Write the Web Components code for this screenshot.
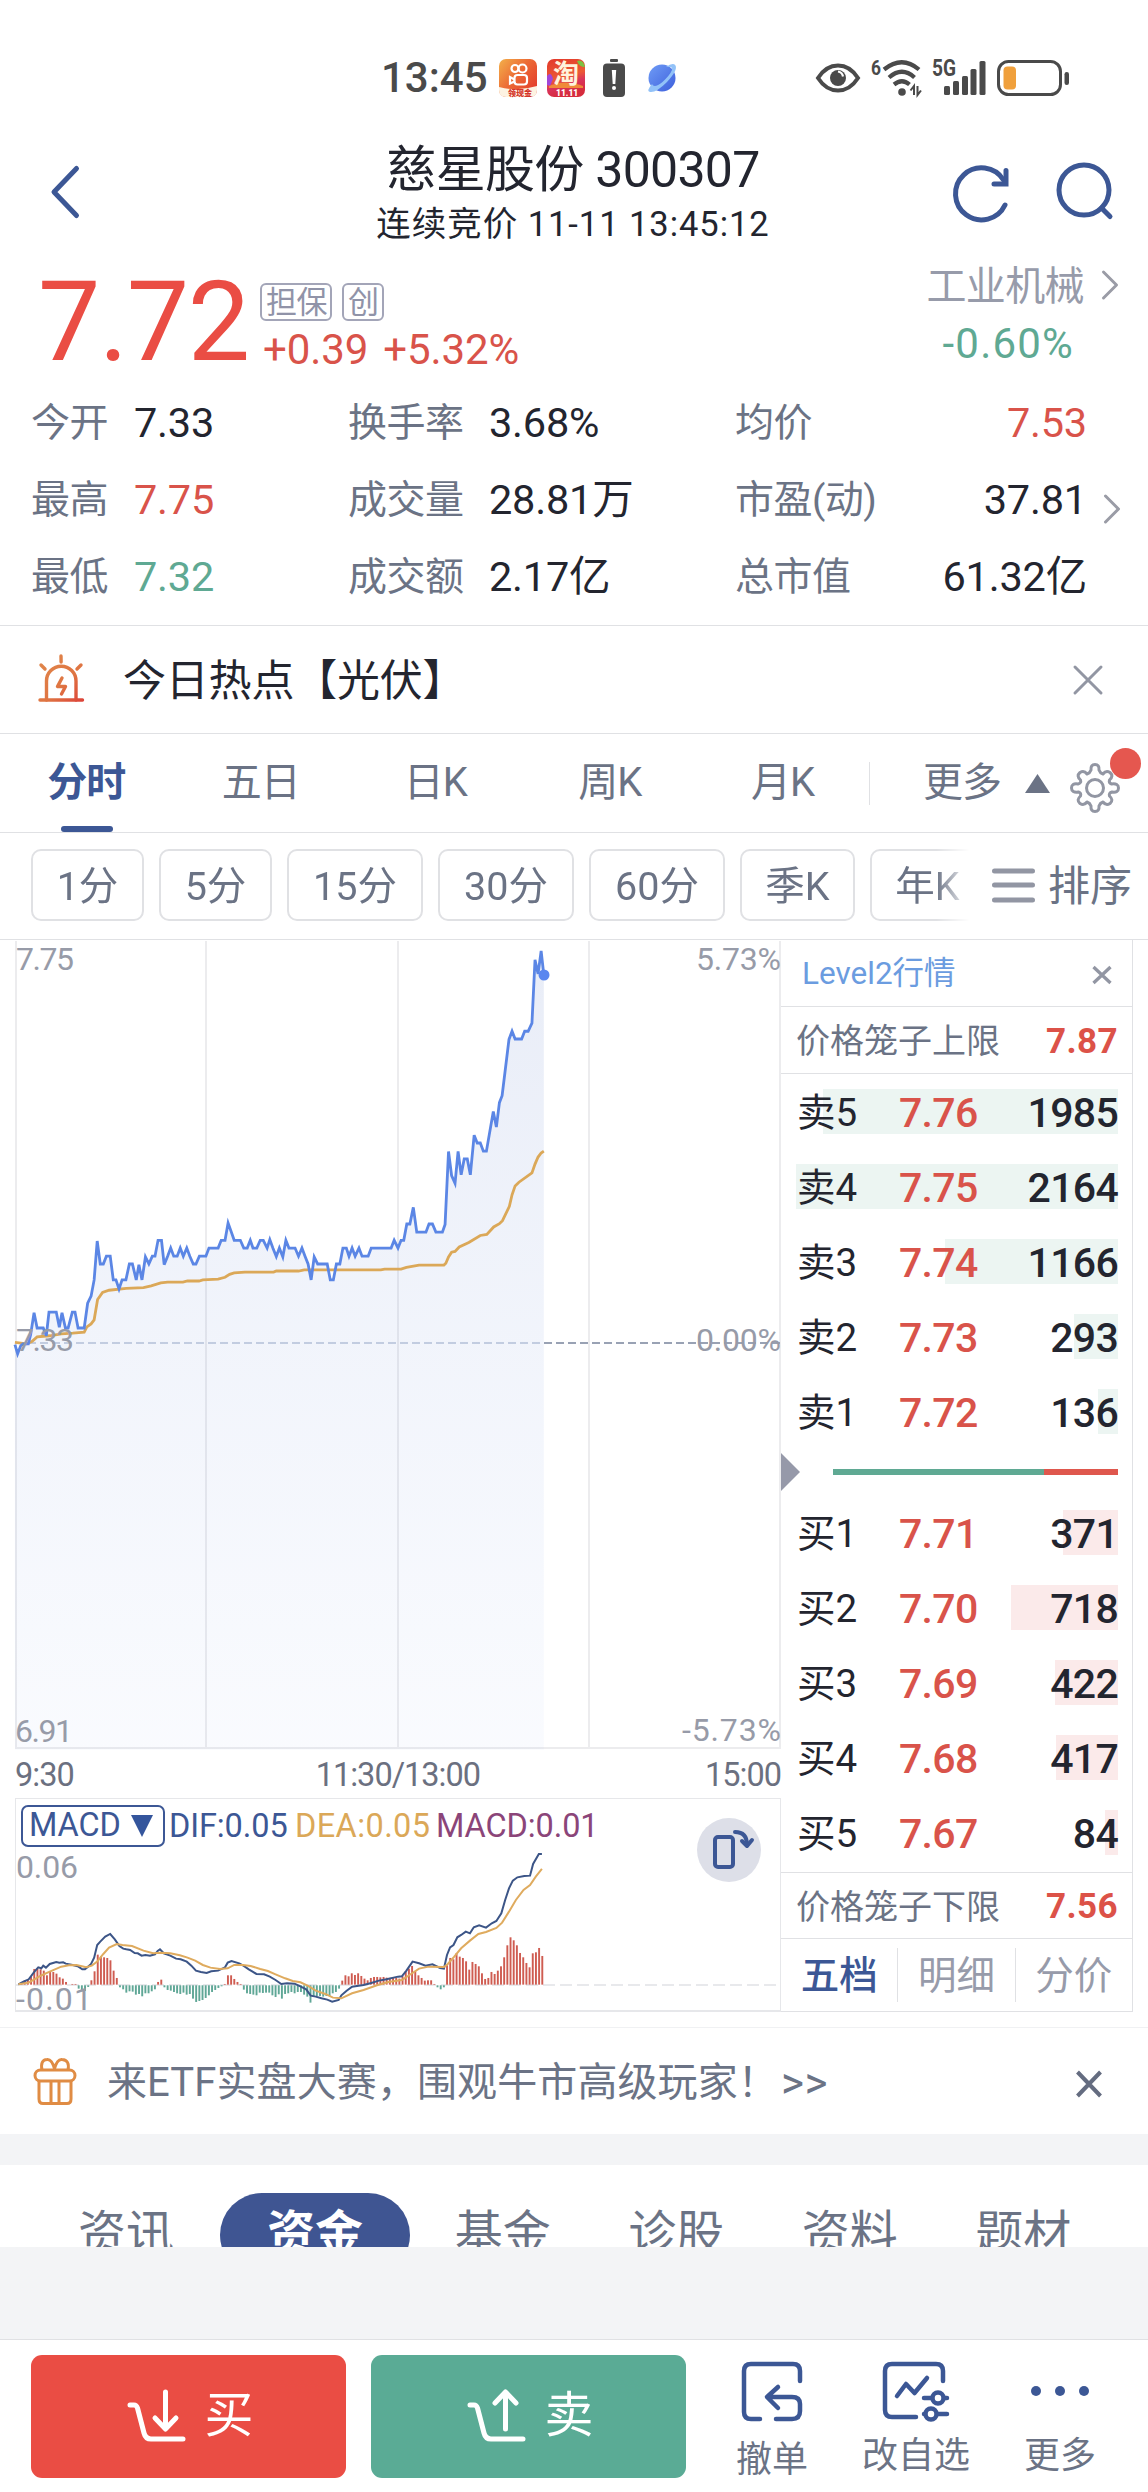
<!DOCTYPE html>
<html lang="zh-CN">
<head>
<meta charset="utf-8">
<title>慈星股份 300307</title>
<style>
  :root {
    --ink: #23252f;
    --label: #6b7385;
    --muted: #979baa;
    --blue: #3c5795;
    --red: #d9534a;
    --red-strong: #ea4d44;
    --green: #5fa993;
    --green-strong: #5aab95;
    --line: #e0e1e4;
    --page: #f3f4f6;
  }

  html, body {
    margin: 0;
    padding: 0;
  }

  body {
    width: 1148px;
    height: 2492px;
    overflow: hidden;
    display: flex;
    flex-direction: column;
    background: var(--page);
    color: var(--ink);
    font-family: Roboto, "Noto Sans CJK SC", sans-serif;
    line-height: 1;
  }
</style>
</head>
<body>

<status-bar></status-bar>

<quote-header>
  <span slot="name">慈星股份 300307</span>
  <span slot="time">连续竞价 11-11 13:45:12</span>
</quote-header>

<quote-summary></quote-summary>

<hot-banner>今日热点【光伏】</hot-banner>

<chart-tabs></chart-tabs>

<period-bar></period-bar>

<market-view>
  <time-chart slot="chart"></time-chart>
  <macd-chart slot="chart"></macd-chart>
  <order-book slot="book"></order-book>
</market-view>

<promo-banner>
  来ETF实盘大赛，围观牛市高级玩家！
  <span slot="more">&gt;&gt;</span>
</promo-banner>

<section-tabs></section-tabs>

<trade-bar></trade-bar>

<script>
// Base class: clones the static `html` of the subclass into an open shadow root
class ShadowElement extends HTMLElement {

  constructor() {
    super();
    this.attachShadow({ mode: 'open' });
    const template = document.createElement('template');
    template.innerHTML = this.constructor.html;
    this.shadowRoot.appendChild(template.content.cloneNode(true));
  }

}

/* ---------- icons ---------- */

const blue = '#3c5795';

const icons = {
  back: [28, 52, `<path d="M25.500 2.500 L3 26 L25.500 49.500" fill="none" stroke="${blue}" stroke-width="5" stroke-linecap="round" stroke-linejoin="round"/>`],
  refresh: [58, 58, `
    <g fill="none" stroke="${blue}" stroke-width="5" stroke-linecap="round">
      <path d="M53 41 A26 26 0 1 1 51.500 16"/>
      <path d="M54 6.500 V20 H42" stroke-linejoin="miter"/>
    </g>`],
  search: [58, 58, `
    <g fill="none" stroke="${blue}" stroke-width="5" stroke-linecap="round">
      <circle cx="28" cy="28" r="25"/>
      <path d="M45.500 46 L54 54.500"/>
    </g>`],
  chevron: [18, 30, `<path d="M2.500 2 L15.500 15 L2.500 28" fill="none" stroke="#9a9ca6" stroke-width="3" stroke-linecap="round" stroke-linejoin="round"/>`],
  close: [30, 30, `<path d="M2 2 L28 28 M28 2 L2 28" fill="none" stroke="#9296a3" stroke-width="3" stroke-linecap="round"/>`],
  'close-small': [20, 20, `<path d="M1.500 2 L18.500 18 M18.500 2 L1.500 18" fill="none" stroke="#9296a3" stroke-width="3.300"/>`],
  'close-dark': [26, 26, `<path d="M1.500 1 L24.500 25 M24.500 1 L1.500 25" fill="none" stroke="#646c80" stroke-width="4"/>`],
  kuaishou: [38, 38, `
    <defs><linearGradient id="g" x1="0" y1="0" x2="1" y2=".8"><stop offset="0" stop-color="#f3b04a"/><stop offset=".5" stop-color="#ec6a35"/><stop offset="1" stop-color="#e33b2c"/></linearGradient></defs>
    <rect width="38" height="38" rx="7" fill="url(#g)"/>
    <path d="M0 28 Q18 33 38 27 V31 Q38 38 31 38 H7 Q0 38 0 31 Z" fill="#fdf3e2"/>
    <g fill="none" stroke="#fff" stroke-width="2.200">
      <circle cx="16" cy="9.500" r="3.500"/><circle cx="23.500" cy="9.500" r="4"/>
      <rect x="15.500" y="16" width="12.500" height="9.500" rx="3"/>
      <path d="M15.500 20.500 L11 18 V24.500 L15.500 22.500"/>
    </g>
    <text x="9" y="36.500" font-size="8" font-weight="900" fill="#d4362b" font-family="'Noto Sans CJK SC', sans-serif">领现金</text>`],
  taobao: [38, 38, `
    <defs><linearGradient id="t" x1="0" y1="0" x2=".3" y2="1"><stop offset="0" stop-color="#e2382b"/><stop offset=".55" stop-color="#ec5a35"/><stop offset=".75" stop-color="#d9335b"/><stop offset="1" stop-color="#d62c3d"/></linearGradient></defs>
    <rect width="38" height="38" rx="7" fill="url(#t)"/>
    <path d="M0 17 Q4 12 6 20 L3 27 L0 26 Z" fill="#a046d8"/>
    <path d="M30 2 Q36 0 38 8 Q32 8 30 2 Z" fill="#7dc242"/>
    <path d="M2 27 Q18 20 36 27 L36 29 H2 Z" fill="#f08a3a"/>
    <text x="6" y="24" font-size="26" font-weight="700" fill="#fff3dc" font-family="'Noto Sans CJK SC', sans-serif">淘</text>
    <text x="9" y="36.500" font-size="8.500" font-weight="900" fill="#fff" font-family="Roboto, sans-serif">11.11</text>`],
  'battery-alert': [22, 38, `
    <rect x="7" y="0" width="8" height="3" rx="1" fill="#4a4a4a"/>
    <rect y="4.500" width="22" height="33.500" rx="4" fill="#4a4a4a"/>
    <path d="M8.800 11 H13.200 L12.300 25 H9.700 Z" fill="#fff"/><circle cx="11" cy="29" r="2" fill="#fff"/>`],
  planet: [30, 30, `
    <defs><linearGradient id="p" x1="0" y1="0" x2="1" y2="1"><stop offset="0" stop-color="#6f9cf6"/><stop offset="1" stop-color="#3d5fdc"/></linearGradient></defs>
    <circle cx="15" cy="15" r="13.500" fill="url(#p)"/>
    <path d="M5 21 Q-1 28 3 29 Q9 30 20 19 Q31 7 28.500 2.500 Q26 -1 19 4 Q26 3 25 7 Q23 12 15.500 19 Q7 26 5 21 Z" fill="#92c2f8"/>`],
  eye: [44, 30, `
    <path d="M2 15 Q10 2.500 22 2.500 Q34 2.500 42 15 Q34 27.500 22 27.500 Q10 27.500 2 15 Z" fill="none" stroke="#4a4a4a" stroke-width="4"/>
    <circle cx="22" cy="15" r="8" fill="#4a4a4a"/><path d="M22 8.500 A6 6 0 0 1 27 13.500" fill="none" stroke="#fff" stroke-width="2.200"/>`],
  wifi: [50, 38, `
    <text x="0" y="16" font-size="21" font-weight="700" fill="#4a4a4a" textLength="10" lengthAdjust="spacingAndGlyphs">6</text>
    <g fill="none" stroke="#4a4a4a" stroke-width="4.200">
      <path d="M13 10.500 Q31 -4 48 10.500"/><path d="M18 18.500 Q31 7 43.500 18.500"/><path d="M23 25.500 Q31 19 38.500 25.500"/>
    </g>
    <circle cx="31" cy="33" r="3.800" fill="#4a4a4a"/>
    <path d="M43 36 V27 L39.500 31.500 M46.500 27 V36 L50 31.500" fill="none" stroke="#4a4a4a" stroke-width="2"/>`],
  signal: [54, 38, `
    <text x="0" y="17" font-size="23" font-weight="700" fill="#4a4a4a" textLength="24" lengthAdjust="spacingAndGlyphs">5G</text>
    <g fill="#4a4a4a">
      <rect x="12" y="27" width="6" height="9" rx="1.500"/><rect x="21" y="22" width="6" height="14" rx="1.500"/>
      <rect x="30" y="17" width="6" height="19" rx="1.500"/><rect x="38.500" y="10" width="6" height="26" rx="1.500"/>
      <rect x="47.500" y="2" width="6" height="34" rx="1.500"/>
    </g>`],
  battery: [73, 36, `
    <rect x="1.500" y="1.500" width="62" height="33" rx="10" fill="none" stroke="#4a4a4a" stroke-width="3"/>
    <rect x="6.500" y="6.500" width="12.500" height="23" rx="4" fill="#f0a03c"/>
    <rect x="67.500" y="12" width="4.500" height="13" rx="2.200" fill="#4a4a4a"/>`],
  siren: [46, 48, `
    <defs><linearGradient id="s" x1="0" y1="0" x2="46" y2="48" gradientUnits="userSpaceOnUse"><stop offset="0" stop-color="#e08a4c"/><stop offset=".6" stop-color="#df7442"/><stop offset="1" stop-color="#dc4038"/></linearGradient></defs>
    <g fill="none" stroke="url(#s)" stroke-width="3.400" stroke-linecap="round" stroke-linejoin="round">
      <path d="M2 46 H44.500 L44.500 46.100"/><path d="M8.500 46 V27 A14.500 14.500 0 0 1 38 27 V46"/>
      <path d="M23 2 L23.100 8 M3 11 L7 15 M43 11 L39 15"/>
      <path d="M24 24 L19.500 32.500 H27.500 L23.500 40"/>
    </g>`],
  gear: [52, 52, `
    <g fill="none" stroke="#9296a3" stroke-width="3" stroke-linejoin="round">
      <circle cx="26" cy="26" r="8.500"/>
      <path d="M22 8 Q21.500 2.500 26 2.500 Q30.500 2.500 30 8 Q31 11 34 12 Q37 8 41 10.500 Q45 14 40.500 18 Q39.500 21 42.500 22 Q49.500 21 49.500 26 Q49.500 31 43 30 Q39.500 31 40.500 34 Q45 38 41 41.500 Q37 44 34 40 Q31 41 30 44 Q30.500 49.500 26 49.500 Q21.500 49.500 22 44 Q21 41 18 40 Q15 44 11 41.500 Q7 38 11.500 34 Q12.500 31 9.500 30 Q2.500 31 2.500 26 Q2.500 21 9 22 Q12.500 21 11.500 18 Q7 14 11 10.500 Q15 8 18 12 Q21 11 22 8 Z"/>
    </g>`],
  sort: [43, 36, `<path d="M2.500 4 H40.500 M2.500 18 H40.500 M2.500 33 H40.500" fill="none" stroke="#9296a3" stroke-width="5" stroke-linecap="round"/>`],
  'arrow-up': [25, 19, `<path d="M12.500 0 L25 19 H0 Z" fill="#6b7385"/>`],
  rotate: [64, 64, `
    <circle cx="32" cy="32" r="32" fill="#dddfe8"/>
    <g fill="none" stroke="${blue}" stroke-width="4" stroke-linecap="round" stroke-linejoin="round">
      <rect x="18" y="19" width="18" height="30" rx="3"/>
      <path d="M38 14 Q50 14 50 27"/><path d="M45 23 L50 28 L55 22"/>
    </g>`],
  gift: [44, 48, `
    <g fill="none" stroke="#e08c44" stroke-width="3" stroke-linejoin="round">
      <rect x="2" y="13" width="40" height="11" rx="5.500"/>
      <path d="M6 24 V42 Q6 46.500 10 46.500 H34 Q38 46.500 38 42 V24 M18 24 V46.500 M26 24 V46.500"/>
      <path d="M9 13 Q7 3 14 2.500 Q19 2 21.500 12 Q24 2 29 2.500 Q37 3 35 13"/>
    </g>`],
  buy: [60, 54, `
    <g fill="none" stroke="#fff" stroke-width="5" stroke-linecap="round" stroke-linejoin="round">
      <path d="M3 16 H7 Q9.500 16 10.500 19 L17 44 Q18.500 50 24 50 H56"/>
      <path d="M38.500 3 V38 M28 29 L38.500 40 L49 29"/>
    </g>`],
  sell: [60, 54, `
    <g fill="none" stroke="#fff" stroke-width="5" stroke-linecap="round" stroke-linejoin="round">
      <path d="M3 16 H7 Q9.500 16 10.500 19 L17 44 Q18.500 50 24 50 H56"/>
      <path d="M38.500 40 V4 M28 14 L38.500 3 L49 14"/>
    </g>`],
  cancel: [62, 62, `
    <g fill="none" stroke="${blue}" stroke-width="4.500" stroke-linecap="round" stroke-linejoin="round">
      <path d="M59 20 V10 Q59 3 52 3 H10 Q3 3 3 10 V51 Q3 58 10 58 H19"/>
      <path d="M37 26 L26 36 L37 47 M27 36 H51 Q59 36 59 43 V50 Q59 58 51 58 H35"/>
    </g>`],
  watch: [68, 62, `
    <g fill="none" stroke="${blue}" stroke-width="4.500" stroke-linecap="round" stroke-linejoin="round">
      <path d="M61 20 V10 Q61 3 54 3 H10 Q3 3 3 10 V49 Q3 56 10 56 H34"/>
      <path d="M15 35 L24 23 L32.500 32 L45 17"/>
      <path d="M42 37 H49 M63 37 H65 M42 53 H43 M56 53 H65"/>
      <circle cx="56" cy="37" r="5.500"/><circle cx="49" cy="53" r="5.500"/>
    </g>`],
  dots: [60, 62, `<g fill="${blue}"><circle cx="6" cy="30" r="5"/><circle cx="30" cy="30" r="5"/><circle cx="54" cy="30" r="5"/></g>`]
};

class UiIcon extends HTMLElement {

  connectedCallback() {
    if (this.shadowRoot) return;
    const [w, h, body] = icons[this.getAttribute('name')];
    this.attachShadow({ mode: 'open' }).innerHTML = `
      <style>
        :host { display: block; flex: none; width: ${w}px; height: ${h}px; }
        svg { display: block; overflow: visible; }
      </style>
      <svg width="${w}" height="${h}" viewBox="0 0 ${w} ${h}">${body}</svg>`;
  }

}

/* ---------- top of the page ---------- */

class StatusBar extends ShadowElement {

  static html = /*html*/`
    <style>
      :host { display: flex; align-items: center; flex: none; height: 120px; padding: 36px 78px 0 381px; box-sizing: border-box; background: #fff; color: #4a4a4a; }
      .time { font-size: 42px; font-weight: 500; width: 118px; }
      .apps { display: flex; align-items: center; gap: 10px; flex: 1; }
      .apps ui-icon:nth-child(3) { margin-left: 8px; }
      .apps ui-icon:nth-child(4) { margin-left: 12px; }
      .system { display: flex; align-items: center; gap: 11px; }
    </style>
    <div class="time">13:45</div>
    <div class="apps">
      <ui-icon name="kuaishou"></ui-icon>
      <ui-icon name="taobao"></ui-icon>
      <ui-icon name="battery-alert"></ui-icon>
      <ui-icon name="planet"></ui-icon>
    </div>
    <div class="system">
      <ui-icon name="eye"></ui-icon>
      <ui-icon name="wifi"></ui-icon>
      <ui-icon name="signal"></ui-icon>
      <ui-icon name="battery"></ui-icon>
    </div>
  `;

}

class QuoteHeader extends ShadowElement {

  static html = /*html*/`
    <style>
      :host { display: grid; grid-template-columns: 1fr auto 1fr; flex: none; height: 130px; padding: 0 34px 0 51px; box-sizing: border-box; background: #fff; }
      .back { padding-top: 46px; }
      .title { display: flex; flex-direction: column; align-items: center; padding: 24px 0 0; margin-right: 19px; }
      .name { font-size: 50px; letter-spacing: -0.7px; line-height: 52px; white-space: nowrap; }
      .time { font-size: 34.500px; line-height: 36px; margin-top: 10px; letter-spacing: .95px; white-space: nowrap; }
      .actions { display: flex; justify-content: flex-end; gap: 46px; padding-top: 42px; }
      .actions ui-icon:first-child { margin-top: 2px; }
    </style>
    <div class="back"><ui-icon name="back"></ui-icon></div>
    <div class="title">
      <div class="name"><slot name="name"></slot></div>
      <div class="time"><slot name="time"></slot></div>
    </div>
    <div class="actions">
      <ui-icon name="refresh"></ui-icon>
      <ui-icon name="search"></ui-icon>
    </div>
  `;

}

class StatItem extends HTMLElement {

  connectedCallback() {
    if (this.shadowRoot) return;
    this.attachShadow({ mode: 'open' }).innerHTML = /*html*/`
      <style>
        :host { display: flex; align-items: center; height: 77px; padding-top: 3px; box-sizing: border-box; white-space: nowrap; }
        .label { flex: none; width: var(--label-width); font-size: 39px; color: var(--label); letter-spacing: -0.5px; }
        .value { flex: 1; font-size: 41.500px; text-align: var(--value-align, left); letter-spacing: -0.2px; }
        :host([up]) .value { color: var(--red); }
        :host([down]) .value { color: var(--green); }
      </style>
      <div class="label">${this.getAttribute('label')}</div>
      <div class="value"><slot></slot></div>`;
  }

}

class QuoteSummary extends ShadowElement {

  static html = /*html*/`
    <style>
      :host { display: block; flex: none; height: 375px; padding: 0 29px 0 31px; box-sizing: border-box; background: #fff; }
      .top { display: flex; height: 133px; }
      .price { width: 229px; padding-top: 17px; margin-left: 7px; font-size: 111px; line-height: 111px; letter-spacing: -1.400px; color: var(--red-strong); }
      .detail { flex: 1; padding: 33px 0 0 0; margin-left: -7px; }
      .tags { display: flex; gap: 10px; }
      .tag { height: 38px; line-height: 35px; box-sizing: border-box; border: 2px solid #a3a5b8; border-radius: 6px; padding: 0 3px 0 4px; font-size: 31px; letter-spacing: -.5px; color: #9093a8; }
      .change { display: flex; gap: 15px; margin-top: 8px; padding-left: 3px; font-size: 42px; letter-spacing: -.1px; color: var(--red); }
      .sector { display: grid; grid-template-columns: auto 18px; column-gap: 17px; align-content: start; justify-items: end; padding-top: 17px; }
      .sector .name { font-size: 40px; line-height: 40px; color: var(--muted); letter-spacing: -.6px; }
      .sector ui-icon { margin-top: 3px; }
      .sector .rate { margin: 16px 10px 0 0; font-size: 42px; letter-spacing: 1.200px; color: var(--green); }
      .stats { display: flex; }
      .grid { display: grid; grid-template-columns: 317px 387px 352px; }
      .a { --label-width: 103px; }
      .b { --label-width: 141px; }
      .c { --label-width: 150px; --value-align: right; }
      .stats ui-icon { margin: 111px 0 0 16px; }
    </style>
    <div class="top">
      <div class="price">7.72</div>
      <div class="detail">
        <div class="tags"><div class="tag">担保</div><div class="tag">创</div></div>
        <div class="change"><span>+0.39</span><span>+5.32%</span></div>
      </div>
      <div class="sector">
        <div class="name">工业机械</div><ui-icon name="chevron"></ui-icon>
        <div class="rate">-0.60%</div>
      </div>
    </div>
    <div class="stats">
      <div class="grid">
        <stat-item class="a" label="今开">7.33</stat-item>
        <stat-item class="b" label="换手率">3.68%</stat-item>
        <stat-item class="c" label="均价" up>7.53</stat-item>
        <stat-item class="a" label="最高" up>7.75</stat-item>
        <stat-item class="b" label="成交量">28.81万</stat-item>
        <stat-item class="c" label="市盈(动)">37.81</stat-item>
        <stat-item class="a" label="最低" down>7.32</stat-item>
        <stat-item class="b" label="成交额">2.17亿</stat-item>
        <stat-item class="c" label="总市值">61.32亿</stat-item>
      </div>
      <ui-icon name="chevron"></ui-icon>
    </div>
  `;

}

class HotBanner extends ShadowElement {

  static html = /*html*/`
    <style>
      :host { display: flex; align-items: center; flex: none; height: 108px; padding: 0 45px 0 38px; box-sizing: border-box; background: #fff; border-top: 1px solid var(--line); }
      .text { flex: 1; padding: 3px 0 0 39px; font-size: 43px; letter-spacing: -.2px; }
      ui-icon[name="siren"] { margin-bottom: 3px; }
    </style>
    <ui-icon name="siren"></ui-icon>
    <div class="text"><slot></slot></div>
    <ui-icon name="close"></ui-icon>
  `;

}

class ChartTabs extends ShadowElement {

  static html = /*html*/`
    <style>
      :host { display: flex; flex: none; height: 99px; box-sizing: border-box; background: #fff; border-top: 1px solid var(--line); font-size: 40px; color: var(--label); letter-spacing: -1px; }
      .tab { display: flex; flex-direction: column; align-items: center; width: 174.500px; padding-top: 29px; box-sizing: border-box; }
      .tab span { margin-left: -2px; }
      .tab.active { color: var(--blue); font-weight: 700; }
      .tab.active::after { content: ""; width: 52px; height: 6px; margin-top: 23px; border-radius: 3px; background: var(--blue); }
      .tab.last { width: 171px; }
      .more { display: flex; align-items: flex-start; height: 43px; margin-top: 28px; border-left: 1px solid var(--line); padding-left: 53px; }
      .more span { margin-top: 1px; }
      .more ui-icon { margin: 12px 19px 0 24px; }
      .settings { position: relative; margin-top: 28px; }
      .badge { position: absolute; left: 41px; top: -14px; width: 31px; height: 31px; border-radius: 50%; background: #e5574f; }
    </style>
    <div class="tab active"><span>分时</span></div>
    <div class="tab"><span>五日</span></div>
    <div class="tab"><span>日K</span></div>
    <div class="tab"><span>周K</span></div>
    <div class="tab last"><span>月K</span></div>
    <div class="more"><span>更多</span><ui-icon name="arrow-up"></ui-icon></div>
    <div class="settings"><ui-icon name="gear"></ui-icon><div class="badge"></div></div>
  `;

}

class PeriodBar extends ShadowElement {

  static html = /*html*/`
    <style>
      :host { display: flex; align-items: center; flex: none; height: 107px; padding: 0 16px 2px 31px; box-sizing: border-box; background: #fff; border-top: 1px solid var(--line); color: var(--label); }
      .chips { display: flex; gap: 15px; width: 939px; overflow: hidden; -webkit-mask-image: linear-gradient(90deg, #000 905px, transparent 939px); mask-image: linear-gradient(90deg, #000 905px, transparent 939px); }
      .chip { flex: none; width: 113px; height: 72px; line-height: 71px; box-sizing: border-box; border: 2px solid var(--line); border-radius: 10px; text-align: center; font-size: 39.500px; }
      .chip.wide { width: 136px; }
      .chip.k { width: 115px; }
      ui-icon { margin-left: 22px; }
      .sort { margin: 3px 0 0 13px; font-size: 42px; white-space: nowrap; }
    </style>
    <div class="chips">
      <div class="chip">1分</div>
      <div class="chip">5分</div>
      <div class="chip wide">15分</div>
      <div class="chip wide">30分</div>
      <div class="chip wide">60分</div>
      <div class="chip k">季K</div>
      <div class="chip k">年K</div>
    </div>
    <ui-icon name="sort"></ui-icon>
    <div class="sort">排序</div>
  `;

}

/* ---------- charts ---------- */

class MarketView extends ShadowElement {

  static html = /*html*/`
    <style>
      :host { display: flex; flex: none; height: 1089px; box-sizing: border-box; background: #fff; border-top: 1px solid var(--line); border-bottom: 1px solid #f0f1f3; }
      .charts { display: flex; flex-direction: column; width: 766px; margin-left: 15px; }
    </style>
    <div class="charts"><slot name="chart"></slot></div>
    <slot name="book"></slot>
  `;

}

const pricePoints = '39,1472 46,1497 54,1475 60,1470 74,1470 80,1445 89,1386 97,1427 113,1427 121,1448 128,1384 147,1384 155,1425 162,1386 171,1427 178,1427 189,1384 196,1384 204,1427 220,1427 229,1360 238,1341 246,1297 254,1192 262,1254 270,1254 278,1233 288,1233 296,1297 303,1297 311,1322 319,1297 329,1297 338,1254 346,1254 356,1297 363,1256 371,1297 380,1235 389,1254 398,1233 405,1233 413,1190 422,1190 429,1256 438,1233 446,1211 454,1233 463,1233 471,1211 479,1233 488,1211 496,1233 505,1254 512,1254 521,1233 538,1233 546,1211 570,1211 578,1190 588,1190 596,1143 612,1190 628,1190 637,1211 646,1211 654,1190 661,1211 671,1211 680,1190 688,1190 698,1211 705,1188 713,1211 722,1234 730,1211 739,1235 747,1190 755,1211 771,1211 780,1233 789,1211 797,1233 805,1254 813,1297 821,1235 830,1254 855,1254 863,1297 871,1297 879,1254 888,1254 896,1211 905,1211 912,1233 920,1211 928,1233 938,1211 946,1233 962,1233 970,1211 1022,1211 1030,1190 1040,1211 1048,1190 1055,1190 1063,1146 1071,1146 1080,1101 1089,1168 1113,1168 1121,1146 1130,1146 1139,1168 1156,1168 1163,1147 1172,950 1180,1015 1189,1036 1197,950 1205,1013 1213,970 1221,970 1229,1013 1239,906 1247,927 1255,927 1263,949 1271,949 1289,842 1297,884 1305,818 1312,799 1330,647 1338,625 1346,646 1363,646 1371,625 1380,625 1390,603 1398,432 1406,470 1414,408 1421,473';

const averagePoints = '39,1466 70,1470 84,1463 97,1451 130,1448 160,1443 190,1441 220,1438 227,1424 238,1416 246,1405 255,1350 268,1331 285,1325 330,1320 375,1318 395,1313 420,1305 438,1303 478,1303 490,1300 520,1300 530,1297 570,1295 588,1290 600,1282 612,1278 640,1276 715,1276 722,1273 780,1273 795,1270 995,1270 1005,1268 1048,1268 1062,1263 1095,1257 1160,1257 1165,1252 1172,1235 1180,1222 1189,1220 1200,1208 1225,1196 1255,1177 1272,1174 1290,1154 1305,1145 1313,1137 1331,1098 1338,1067 1346,1043 1356,1033 1390,1008 1398,984 1406,965 1414,954 1421,949';

class TimeChart extends ShadowElement {

  static html = /*html*/`
    <style>
      :host { display: block; height: 858px; }
      svg { display: block; overflow: visible; }
      polyline { fill: none; stroke-width: 2.800; vector-effect: non-scaling-stroke; stroke-linejoin: miter; }
      text { font-size: 32px; fill: #979ba8; }
      .axis { display: flex; justify-content: space-between; align-items: center; height: 48px; font-size: 32.500px; letter-spacing: -1px; color: #6b7080; padding-top: 3px; box-sizing: border-box; }
      .axis span:nth-child(2) { padding-left: 17px; }
    </style>
    <svg width="766" height="810" viewBox="0 0 766 810">
      <defs>
        <linearGradient id="area" x1="0" y1="0" x2="0" y2="1">
          <stop offset="0" stop-color="#4668bd" stop-opacity=".12"/>
          <stop offset="1" stop-color="#5b86e5" stop-opacity=".035"/>
        </linearGradient>
      </defs>
      <path d="M1 1 V808 H765 V1 M191 1 V808 M383 1 V808 M574 1 V808" fill="none" stroke="#ececee" stroke-width="2"/>
      <path d="M1 403 H529" stroke="#ccd4e2" stroke-width="2" stroke-dasharray="8 4"/>
      <path d="M529 403 H765" stroke="#99a2b4" stroke-width="2" stroke-dasharray="8 4"/>
      <g transform="translate(-15 -140) scale(.3827 .37)">
        <polygon points="39,2567 ${pricePoints} 1421,2567" fill="url(#area)"/>
        <polyline points="${averagePoints}" stroke="#dba858"/>
        <polyline points="${pricePoints}" stroke="#5b86e5"/>
      </g>
      <circle cx="529" cy="35" r="5.500" fill="#5a87ef"/>
      <text x="1" y="30" textLength="58">7.75</text>
      <text x="1" y="411" textLength="58">7.33</text>
      <text x="0" y="802" textLength="58">6.91</text>
      <text x="681" y="30" textLength="85">5.73%</text>
      <text x="681" y="411" textLength="85">0.00%</text>
      <text x="667" y="801" textLength="99">-5.73%</text>
    </svg>
    <div class="axis"><span>9:30</span><span>11:30/13:00</span><span>15:00</span></div>
  `;

}

const difPoints = '48,853 60,846 75,838 90,815 100,802 108,805 113,797 120,803 130,792 147,786 155,788 165,787 172,791 190,795 205,800 215,808 222,808 230,800 238,792 246,773 254,735 262,725 275,710 288,702 300,718 312,738 322,746 330,748 340,750 352,759 360,760 370,767 380,765 392,767 405,763 412,753 418,748 428,760 445,767 460,776 472,778 488,785 500,797 512,812 525,816 540,819 552,814 570,812 588,802 595,788 605,783 625,790 637,798 650,808 660,815 670,822 690,823 705,830 720,840 735,852 750,850 770,851 790,862 800,868 812,887 825,890 840,895 855,899 868,905 885,900 892,886 905,873 920,860 950,855 970,849 990,842 1010,838 1040,830 1050,829 1062,812 1078,785 1095,790 1112,797 1130,793 1150,804 1160,806 1168,765 1176,742 1185,735 1195,712 1205,705 1217,695 1228,700 1238,682 1252,676 1270,683 1285,670 1297,663 1310,640 1320,600 1330,565 1340,542 1352,532 1370,528 1385,527 1393,492 1408,462 1416,462';

const deaPoints = '48,853 75,848 90,838 105,828 130,815 160,800 180,796 200,795 225,802 240,797 254,785 270,762 285,743 305,732 320,735 345,738 375,752 400,760 420,758 445,760 470,766 490,773 510,782 530,795 550,803 575,807 595,805 612,795 635,795 655,798 680,807 700,813 720,823 745,835 765,843 785,847 805,858 825,872 850,882 870,893 892,895 920,880 950,870 985,856 1015,846 1050,840 1070,825 1095,806 1120,800 1160,801 1170,792 1187,770 1205,745 1228,722 1250,702 1270,696 1297,684 1312,668 1330,635 1348,600 1368,570 1385,555 1400,530 1416,507';

// One histogram value per minute, above (red) or below (green) the zero line
const histogram = [
  0, 5, 13, 15, 25, 47, 48, 46, 42, 28, 40, 38, 33, 22, 18, 8, 0, 2, 2, -10, -14, -17, -5, 13, 40,
  90, 85, 82, 80, 73, 42, 20, -6, -12, -22, -18, -19, -28, -26, -33, -24, -24, -18, -12, 8, 15, -6,
  -14, -16, -20, -24, -26, -22, -28, -26, -40, -50, -47, -44, -38, -30, -20, -14, -8, -3, 2, 28,
  28, 17, 8, 2, -13, -24, -26, -28, -30, -22, -23, -22, -22, -30, -35, -27, -40, -26, -24, -20,
  -24, -20, -20, -28, -34, -52, -32, -32, -32, -34, -32, -32, -24, -20, -10, 12, 28, 25, 34, 29, 34,
  26, 18, 13, 20, 23, 23, 22, 23, 21, 20, 22, 20, 18, 25, 40, 48, 56, 40, 28, 20, 12, 13, 13, 2, -6,
  -12, -6, 58, 80, 76, 95, 84, 80, 70, 45, 68, 62, 55, 34, 17, 20, 38, 32, 42, 55, 82, 118, 142, 133,
  118, 95, 82, 65, 52, 94, 97, 110, 86
];

const histogramBars = histogram.map((v, i) => {
  const x = 45.5 + i * (1369 / (histogram.length - 1));
  return `<rect x="${x.toFixed(1)}" y="${v > 0 ? 854 - v : 856}" width="5" height="${Math.abs(v)}" fill="${v > 0 ? '#cf5c51' : '#5fa796'}"/>`;
}).join('');

class MacdChart extends ShadowElement {

  static html = /*html*/`
    <style>
      :host { display: block; position: relative; height: 214px; box-sizing: border-box; border: 1px solid #e6e7ea; border-width: 1px 1px 2px; }
      .legend { display: flex; align-items: center; height: 53px; padding-left: 5px; font-size: 32.500px; white-space: nowrap; letter-spacing: -.1px; }
      .picker { display: flex; align-items: center; justify-content: space-between; width: 144px; height: 42px; margin-right: 4px; padding: 0 10px 0 6px; box-sizing: border-box; border: 2px solid var(--blue); border-radius: 7px; color: var(--blue); }
      .picker i { width: 0; border: 11px solid transparent; border-top: 22px solid #34559c; border-bottom: 0; }
      .dif { color: var(--blue); width: 126px; }
      .dea { color: #dba858; width: 141px; letter-spacing: .4px; }
      .macd { color: #8b4579; }
      .legend div:not(.picker) { padding-top: 2px; }
      svg { display: block; margin-left: -1px; overflow: visible; }
      polyline { fill: none; stroke-width: 2; vector-effect: non-scaling-stroke; }
      text { font-size: 32px; fill: #979ba8; }
      .rotate { position: absolute; left: 681px; top: 19px; }
    </style>
    <div class="legend">
      <div class="picker">MACD<i></i></div>
      <div class="dif">DIF:0.05</div>
      <div class="dea">DEA:0.05</div>
      <div class="macd">MACD:0.01</div>
    </div>
    <svg width="766" height="158" viewBox="0 0 766 158">
      <path d="M1 133 H765" stroke="#e8e9ec" stroke-width="2" stroke-dasharray="12 5"/>
      <g transform="translate(-15 -152) scale(.3827 .3333)">
        ${histogramBars}
        <polyline points="${difPoints}" stroke="#3c5587"/>
        <polyline points="${deaPoints}" stroke="#dfab5e"/>
      </g>
      <text x="1" y="26" textLength="62">0.06</text>
      <text x="1" y="158" textLength="76">-0.01</text>
    </svg>
    <ui-icon class="rotate" name="rotate"></ui-icon>
  `;

}

/* ---------- order book ---------- */

class BookRow extends HTMLElement {

  connectedCallback() {
    if (this.shadowRoot) return;
    const get = name => this.getAttribute(name);
    this.attachShadow({ mode: 'open' }).innerHTML = /*html*/`
      <style>
        :host { display: grid; grid-template-columns: 102px 1fr auto; align-items: center; height: 75px; box-sizing: border-box; margin: 0 14px 0 15px; padding: 3px 0 0 1px;
          background: linear-gradient(var(--depth), var(--depth)) no-repeat right center / ${get('depth')}px 45px; font-size: 41px; font-weight: 500; }
        .level { font-size: 38.500px; font-weight: 400; }
        .price { color: var(--red); letter-spacing: -.7px; }
        .volume { letter-spacing: -.7px; }
      </style>
      <div class="level">${get('level')}</div>
      <div class="price">${get('price')}</div>
      <div class="volume">${get('volume')}</div>`;
  }

}

class OrderBook extends ShadowElement {

  static html = /*html*/`
    <style>
      :host { display: flex; flex-direction: column; width: 352px; height: 1072px; box-sizing: border-box; border: 1px solid var(--line); border-width: 0 1px 1px 0; }
      .head, .limit { display: flex; align-items: center; justify-content: space-between; box-sizing: border-box; height: 67px; padding-top: 2px; }
      .head { padding-left: 21px; padding-right: 20px; font-size: 31.500px; color: #6b9ce0; border-bottom: 1px solid var(--line); }
      .head ui-icon { margin-top: 2px; }
      .limit { padding-left: 15px; padding-right: 14px; font-size: 34px; color: var(--label); }
      .limit b { font-size: 35px; color: #dc5248; letter-spacing: .4px; }
      .upper { border-bottom: 1px solid var(--line); }
      .lower { border-top: 1px solid var(--line); border-bottom: 1px solid var(--line); }
      .sell { --depth: #ecf5f2; }
      .buy { --depth: #fbeaea; padding-bottom: 2px; }
      .ratio { display: flex; align-items: center; height: 46px; padding-right: 14px; }
      .ratio i { width: 0; margin-right: 33px; border: 19px solid transparent; border-left-color: #9699a9; border-right: 0; }
      .ratio div { height: 6px; }
      .ratio .down { width: 211px; background: var(--green); }
      .ratio .up { width: 74px; background: #df574d; }
      .tabs { display: flex; align-items: center; flex: 1; font-size: 38.500px; color: var(--muted); }
      .tabs div { flex: 1; height: 54px; line-height: 56px; text-align: center; border-left: 1px solid var(--line); }
      .tabs div:first-child { color: var(--blue); border: 0; font-weight: 500; }
    </style>
    <div class="head">Level2行情<ui-icon name="close-small"></ui-icon></div>
    <div class="limit upper">价格笼子上限<b>7.87</b></div>
    <div class="sell">
      <book-row level="卖5" price="7.76" volume="1985" depth="295"></book-row>
      <book-row level="卖4" price="7.75" volume="2164" depth="322"></book-row>
      <book-row level="卖3" price="7.74" volume="1166" depth="173"></book-row>
      <book-row level="卖2" price="7.73" volume="293" depth="44"></book-row>
      <book-row level="卖1" price="7.72" volume="136" depth="20"></book-row>
    </div>
    <div class="ratio"><i></i><div class="down"></div><div class="up"></div></div>
    <div class="buy">
      <book-row level="买1" price="7.71" volume="371" depth="55"></book-row>
      <book-row level="买2" price="7.70" volume="718" depth="107"></book-row>
      <book-row level="买3" price="7.69" volume="422" depth="63"></book-row>
      <book-row level="买4" price="7.68" volume="417" depth="62"></book-row>
      <book-row level="买5" price="7.67" volume="84" depth="13"></book-row>
    </div>
    <div class="limit lower">价格笼子下限<b>7.56</b></div>
    <div class="tabs"><div>五档</div><div>明细</div><div>分价</div></div>
  `;

}

/* ---------- bottom of the page ---------- */

class PromoBanner extends ShadowElement {

  static html = /*html*/`
    <style>
      :host { display: flex; align-items: center; flex: none; height: 106px; padding: 0 46px 0 33px; box-sizing: border-box; background: #fff; color: var(--label); }
      .text { padding: 4px 0 0 30px; font-size: 40px; letter-spacing: .1px; white-space: nowrap; }
      .more { flex: 1; padding: 4px 0 0 3px; font-size: 44px; letter-spacing: .5px; }
      ui-icon[name="close-dark"] { margin-top: 5px; }
    </style>
    <ui-icon name="gift"></ui-icon>
    <div class="text"><slot></slot></div>
    <div class="more"><slot name="more"></slot></div>
    <ui-icon name="close-dark"></ui-icon>
  `;

}

class SectionTabs extends ShadowElement {

  static html = /*html*/`
    <style>
      :host { display: flex; flex: none; height: 82px; margin: 31px 0 92px; padding: 28px 0 0 32px; box-sizing: border-box; overflow: hidden; background: #fff; color: var(--label); font-size: 48px; }
      .tab { flex: none; width: 173.500px; height: 84px; line-height: 82px; text-align: center; }
      .first { width: 188px; }
      .active { width: 190px; border-radius: 42px; background: #3f5592; color: #fff; font-weight: 700; margin-right: 6px; }
    </style>
    <div class="tab first">资讯</div>
    <div class="tab active">资金</div>
    <div class="tab">基金</div>
    <div class="tab">诊股</div>
    <div class="tab">资料</div>
    <div class="tab">题材</div>
  `;

}

class TradeBar extends ShadowElement {

  static html = /*html*/`
    <style>
      :host { display: flex; flex: none; height: 153px; padding: 15px 0 0 31px; box-sizing: border-box; background: #fff; border-top: 1px solid var(--line); }
      .button { display: flex; align-items: center; justify-content: center; gap: 17px; width: 315px; height: 123px; margin-right: 25px; padding: 0 0 2px 4px; box-sizing: border-box; border-radius: 11px; background: var(--red-strong); color: #fff; font-size: 49px; }
      .button.sell { background: var(--green-strong); margin-right: 27px; }
      .item { display: flex; flex-direction: column; align-items: center; width: 118px; padding-top: 6px; font-size: 36px; color: var(--label); white-space: nowrap; }
      .item span { margin-top: 15px; }
      .item.cancel span { margin-top: 19px; }
      .item.watch { width: 170px; }
    </style>
    <div class="button"><ui-icon name="buy"></ui-icon>买</div>
    <div class="button sell"><ui-icon name="sell"></ui-icon>卖</div>
    <div class="item cancel"><ui-icon name="cancel"></ui-icon><span>撤单</span></div>
    <div class="item watch"><ui-icon name="watch"></ui-icon><span>改自选</span></div>
    <div class="item"><ui-icon name="dots"></ui-icon><span>更多</span></div>
  `;

}

customElements.define('ui-icon', UiIcon);
customElements.define('stat-item', StatItem);
customElements.define('book-row', BookRow);
customElements.define('status-bar', StatusBar);
customElements.define('quote-header', QuoteHeader);
customElements.define('quote-summary', QuoteSummary);
customElements.define('hot-banner', HotBanner);
customElements.define('chart-tabs', ChartTabs);
customElements.define('period-bar', PeriodBar);
customElements.define('market-view', MarketView);
customElements.define('time-chart', TimeChart);
customElements.define('macd-chart', MacdChart);
customElements.define('order-book', OrderBook);
customElements.define('promo-banner', PromoBanner);
customElements.define('section-tabs', SectionTabs);
customElements.define('trade-bar', TradeBar);
</script>
</body>
</html>
